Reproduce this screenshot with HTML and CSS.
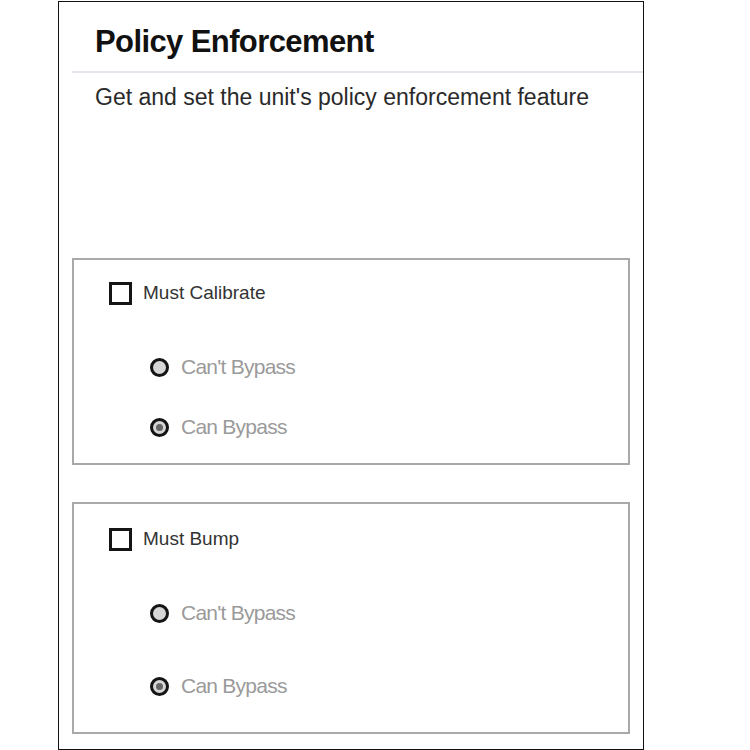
FILE: index.html
```html
<!DOCTYPE html>
<html>
<head>
<meta charset="utf-8">
<link rel="stylesheet" href="styles.css">
</head>
<body>
<div class="frame">
  <div class="header">
    <h1 class="title">Policy Enforcement</h1>
    <div class="rule"></div>
    <p class="subtitle">Get and set the unit's policy enforcement feature</p>
  </div>
  <div class="group group-calibrate">
    <div class="row check-row"><span class="checkbox"></span><span class="check-label">Must Calibrate</span></div>
    <div class="row radio-row first"><span class="radio"></span><span class="radio-label">Can't Bypass</span></div>
    <div class="row radio-row second"><span class="radio selected"></span><span class="radio-label">Can Bypass</span></div>
  </div>
  <div class="group group-bump">
    <div class="row check-row"><span class="checkbox"></span><span class="check-label">Must Bump</span></div>
    <div class="row radio-row first"><span class="radio"></span><span class="radio-label">Can't Bypass</span></div>
    <div class="row radio-row second"><span class="radio selected"></span><span class="radio-label">Can Bypass</span></div>
  </div>
</div>
</body>
</html>
```
FILE: styles.css
```css
html, body {
  margin: 0;
  padding: 0;
  background: #ffffff;
}
body {
  font-family: "Liberation Sans", Arial, sans-serif;
}
.frame {
  box-sizing: border-box;
  margin: 1px 0 0 58px;
  width: 586px;
  height: 749px;
  border: 1px solid #111;
  display: flex;
  flex-direction: column;
}
.header {
  display: flex;
  flex-direction: column;
  padding-top: 20px;
  height: 234px;
  box-sizing: border-box;
}
.title {
  margin: 0 0 0 36px;
  font-size: 31px;
  line-height: 40px;
  font-weight: bold;
  color: #111;
  letter-spacing: -0.6px;
}
.rule {
  margin: 9px 0 0 13px;
  height: 2px;
  background: #e4e6ee;
}
.subtitle {
  margin: 10px 0 0 36px;
  font-size: 23px;
  line-height: 28px;
  color: #2a2a2a;
  letter-spacing: 0;
}
.group {
  box-sizing: border-box;
  margin-left: 13px;
  width: 558px;
  border: 2px solid #a9a9a9;
  display: flex;
  flex-direction: column;
}
.group-calibrate {
  margin-top: 22px;
  padding: 18px 0 21px 0;
}
.group-bump {
  margin-top: 37px;
  padding: 20px 0 31px 0;
}
.row {
  height: 30px;
  display: flex;
  align-items: center;
}
.check-row {
  padding-left: 35px;
}
.group-calibrate .radio-row.first { margin-top: 44px; }
.group-calibrate .radio-row.second { margin-top: 30px; }
.group-bump .radio-row.first { margin-top: 44px; }
.group-bump .radio-row.second { margin-top: 43px; }
.radio-row {
  padding-left: 76px;
}
.checkbox {
  box-sizing: border-box;
  width: 23px;
  height: 23px;
  border: 3px solid #151515;
  background: #fff;
  margin-right: 11px;
}
.check-label {
  font-size: 19px;
  color: #333;
  letter-spacing: 0;
}
.radio {
  box-sizing: border-box;
  width: 19px;
  height: 19px;
  border-radius: 50%;
  border: 3px solid #141414;
  background: #d6d6d6;
  margin-right: 12px;
  display: flex;
  align-items: center;
  justify-content: center;
}
.radio.selected::after {
  content: "";
  width: 7px;
  height: 7px;
  border-radius: 50%;
  background: #666;
}
.radio-label {
  font-size: 21px;
  color: #9a9a9a;
  letter-spacing: -0.75px;
}
```
